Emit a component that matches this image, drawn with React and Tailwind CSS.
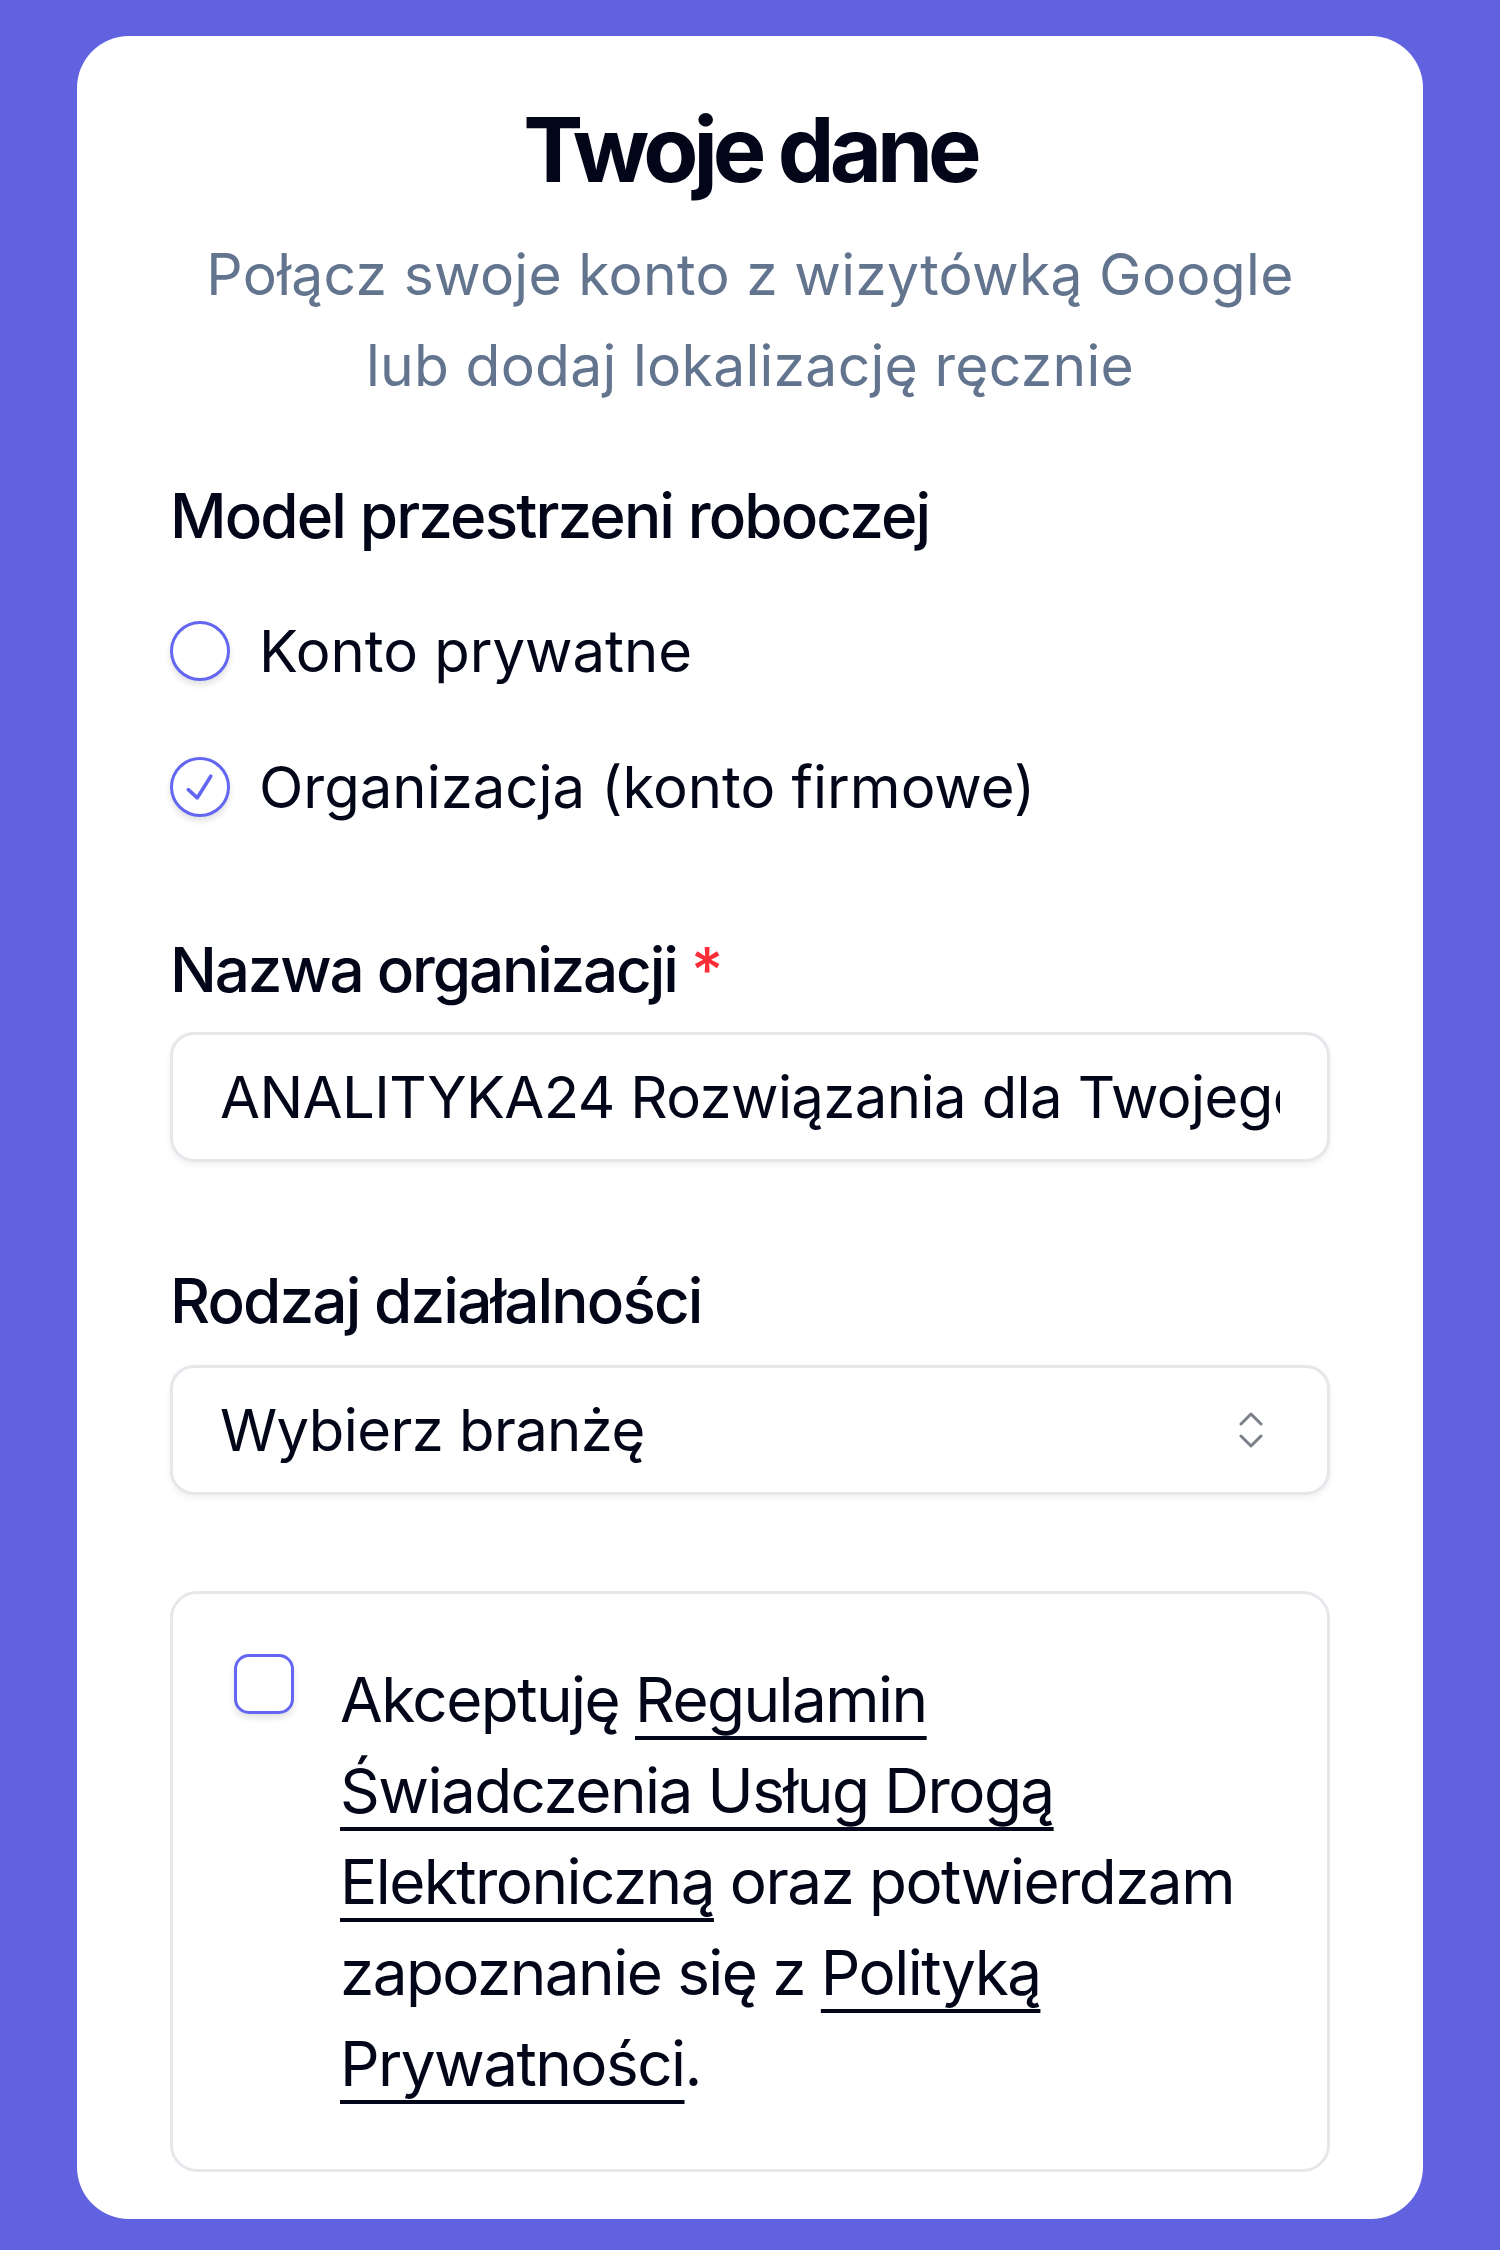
import React, { useState } from 'react';

const RadioOption = ({ label, checked, onSelect }) => {
  return (
    <button type="button" onClick={onSelect} className="flex items-center gap-[29px] text-left">
      <span className="flex h-[60px] w-[60px] shrink-0 items-center justify-center rounded-full border-[3px] border-[#6366f1] bg-white shadow-[0_4px_6px_rgba(0,0,0,0.12)]">
        {checked && (
          <svg width="60" height="60" viewBox="0 0 60 60" fill="none">
            <path d="M17 33 L27 42 L42 18" stroke="#6366f1" strokeWidth="4" strokeLinecap="round" strokeLinejoin="round" />
          </svg>
        )}
      </span>
      <span className="text-[58px] leading-[60px] tracking-normal text-slate-950">{label}</span>
    </button>
  );
};

const App = () => {
  const [model, setModel] = useState('org');
  const [accepted, setAccepted] = useState(false);

  return (
    <div className="min-h-[2250px] bg-[#6062e0] px-[77px] pt-[36px] pb-[35px] font-['Inter',sans-serif]">
      <div className="rounded-[52px] bg-white px-[93px] pt-[60px] pb-[47px]">
        <h1 className="text-center text-[90px] leading-[108px] font-bold tracking-[-0.055em] text-slate-950">
          Twoje dane
        </h1>
        <p className="mx-auto mt-[25px] max-w-[1110px] text-center text-[57px] leading-[91px] tracking-[0.005em] text-slate-500">
          Połącz swoje konto z wizytówką Google lub dodaj lokalizację ręcznie
        </p>

        <h2 className="mt-[67px] text-[62px] leading-[75px] font-medium tracking-[-0.03em] text-slate-950">
          Model przestrzeni roboczej
        </h2>
        <div className="mt-[68px] flex flex-col gap-[76px]">
          <RadioOption label="Konto prywatne" checked={model === 'private'} onSelect={() => setModel('private')} />
          <RadioOption label="Organizacja (konto firmowe)" checked={model === 'org'} onSelect={() => setModel('org')} />
        </div>

        <label className="mt-[115px] block text-[62px] leading-[75px] font-medium tracking-[-0.035em] text-slate-950">
          Nazwa organizacji <span className="text-red-500">*</span>
        </label>
        <input
          type="text"
          defaultValue="ANALITYKA24 Rozwiązania dla Twojego Biznesu"
          className="mt-[25px] block h-[130px] w-full rounded-[24px] border-[3px] border-gray-200 bg-white px-[47px] text-[58px] tracking-[-0.01em] text-slate-950 shadow-[0_3px_6px_rgba(0,0,0,0.06)] outline-none"
        />

        <label className="mt-[101px] block text-[62px] leading-[75px] font-medium tracking-[-0.03em] text-slate-950">
          Rodzaj działalności
        </label>
        <div className="mt-[27px] flex h-[130px] items-center justify-between rounded-[24px] border-[3px] border-gray-200 bg-white pl-[47px] pr-[64px] shadow-[0_3px_6px_rgba(0,0,0,0.06)]">
          <span className="text-[58px] tracking-[-0.01em] text-slate-950">Wybierz branżę</span>
          <svg width="24" height="38" viewBox="0 0 24 38" fill="none">
            <path d="M2 13 L12 3 L22 13" stroke="#7b8088" strokeWidth="3" strokeLinecap="round" strokeLinejoin="round" />
            <path d="M2 25 L12 35 L22 25" stroke="#7b8088" strokeWidth="3" strokeLinecap="round" strokeLinejoin="round" />
          </svg>
        </div>

        <div className="mt-[96px] flex items-start gap-[46px] rounded-[27px] border-[3px] border-gray-200 bg-white pt-[60px] pb-[60px] pl-[61px] pr-[61px]">
          <button
            type="button"
            onClick={() => setAccepted(!accepted)}
            className="h-[60px] w-[60px] shrink-0 rounded-[15px] border-[3px] border-[#6366f1] bg-white shadow-[0_4px_6px_rgba(0,0,0,0.12)]"
          ></button>
          <p className="text-[62px] leading-[91px] tracking-[-0.025em] text-slate-950">
            Akceptuję{' '}
            <a href="#" className="underline decoration-[4px] underline-offset-[14px]">Regulamin Świadczenia Usług Drogą Elektroniczną</a>{' '}
            oraz potwierdzam zapoznanie się z{' '}
            <a href="#" className="underline decoration-[4px] underline-offset-[14px]">Polityką Prywatności</a>.
          </p>
        </div>
      </div>
    </div>
  );
};

export default App;
